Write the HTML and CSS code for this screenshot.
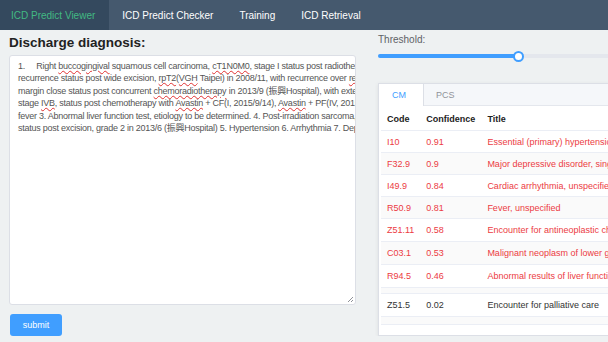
FILE: index.html
```html
<!DOCTYPE html>
<html lang="en">
<head>
    <meta charset="UTF-8">
    <meta name="viewport" content="width=device-width, initial-scale=1.0">
    <title>ICD Predict Viewer</title>
    <link rel="stylesheet" href="styles.css">
</head>
<body>
<div id="nav">
    <a class="nav-item active">ICD Predict Viewer</a>
    <a class="nav-item">ICD Predict Checker</a>
    <a class="nav-item">Training</a>
    <a class="nav-item">ICD Retrieval</a>
</div>
<div id="main">
    <div id="left">
        <h2>Discharge diagnosis:</h2>
        <div class="textbox">
            <div class="line">1.     Right <span class="typo">buccogingival</span> squamous cell carcinoma, <span class="typo">cT1N0M0</span>, stage I status post radiotherapy</div>
            <div class="line">recurrence status post wide excision, <span class="typo">rpT2</span>(<span class="typo">VGH</span> Taipei) in 2008/11, with recurrence over <span class="typo">retromolar</span></div>
            <div class="line">margin close status post concurrent <span class="typo">chemoradiotherapy</span> in 2013/9 (振興Hospital), with extension</div>
            <div class="line">stage <span class="typo">IVB</span>, status post chemotherapy with <span class="typo">Avastin</span> + CF(I, 2015/9/14), <span class="typo">Avastin</span> + PF(IV, 2015</div>
            <div class="line">fever 3. Abnormal liver function test, etiology to be determined. 4. Post-irradiation sarcoma,</div>
            <div class="line">status post excision, grade 2 in 2013/6 (振興Hospital) 5. Hypertension 6. Arrhythmia 7. Depression</div>
            <svg class="grip" width="8" height="8" viewBox="0 0 8 8">
                <path d="M7 2 L2 7 M7 5 L5 7" stroke="#909399" stroke-width="1" fill="none"/>
            </svg>
        </div>
        <button class="submit">submit</button>
    </div>
    <div id="right">
        <div class="label">Threshold:</div>
        <div class="slider">
            <div class="slider-fill" style="width: 140px"></div>
            <div class="slider-handle"></div>
        </div>
        <div class="card">
            <div class="tabs">
                <div class="tab active">CM</div>
                <div class="tab">PCS</div>
            </div>
            <table class="codes">
                <thead>
                    <tr><th class="c-code">Code</th><th class="c-conf">Confidence</th><th>Title</th></tr>
                </thead>
                <tbody>
                    <tr class="hit"><td>I10</td><td>0.91</td><td>Essential (primary) hypertension</td></tr>
                    <tr class="hit"><td>F32.9</td><td>0.9</td><td>Major depressive disorder, single episode, unspecified</td></tr>
                    <tr class="hit"><td>I49.9</td><td>0.84</td><td>Cardiac arrhythmia, unspecified</td></tr>
                    <tr class="hit"><td>R50.9</td><td>0.81</td><td>Fever, unspecified</td></tr>
                    <tr class="hit"><td>Z51.11</td><td>0.58</td><td>Encounter for antineoplastic chemotherapy</td></tr>
                    <tr class="hit"><td>C03.1</td><td>0.53</td><td>Malignant neoplasm of lower gum</td></tr>
                    <tr class="hit"><td>R94.5</td><td>0.46</td><td>Abnormal results of liver function studies</td></tr>
                    <tr class="gap"><td></td><td></td><td></td></tr>
                    <tr><td>Z51.5</td><td>0.02</td><td>Encounter for palliative care</td></tr>
                    <tr class="gap"><td></td><td></td><td></td></tr>
                </tbody>
            </table>
        </div>
    </div>
</div>
</body>
</html>
```

FILE: styles.css
```css
body {
    font-family: "Liberation Sans", Arial, "Noto Sans CJK TC", sans-serif;
    margin: 0;
    padding: 0;
    background-color: #eef1f2;
    overflow: hidden;
}

#nav {
    display: flex;
    height: 30px;
    background-color: #45596e;
}

.nav-item {
    display: flex;
    align-items: center;
    padding: 0 13px;
    font-size: 10px;
    color: #ffffff;
}

.nav-item.active {
    background-color: #34495e;
    color: #42b983;
    padding: 0 14px 0 11px;
}

#main {
    display: flex;
    width: 760px;
    padding: 0 9px;
}

#left {
    width: 347px;
    flex-shrink: 0;
}

#left h2 {
    margin: 0;
    padding-top: 5px;
    font-size: 13.5px;
    line-height: 16px;
    color: #222;
    margin-bottom: 4px;
}

.textbox {
    position: relative;
    height: 250px;
    box-sizing: border-box;
    padding: 4px 8px;
    background-color: #fff;
    border: 1px solid #dcdfe6;
    border-radius: 3px;
    overflow: hidden;
    font-size: 9px;
    letter-spacing: -0.25px;
    line-height: 12.4px;
    color: #555;
}

.line {
    white-space: pre;
}

.typo {
    text-decoration: underline wavy #e03131;
    text-decoration-thickness: 1px;
    text-underline-offset: 1px;
}

.grip {
    position: absolute;
    right: 1px;
    bottom: 1px;
}

.submit {
    display: block;
    margin: 9px 0 0 1px;
    width: 52px;
    height: 22px;
    border: none;
    border-radius: 3px;
    background-color: #409eff;
    color: #fff;
    font-family: inherit;
    font-size: 9px;
    padding: 0;
}

#right {
    width: 320px;
    flex-shrink: 0;
    margin-left: 22px;
}

.label {
    padding-top: 3px;
    font-size: 10px;
    line-height: 14px;
    color: #606266;
}

.slider {
    display: flex;
    align-items: center;
    height: 4px;
    margin-top: 7px;
    border-radius: 2px;
    background-color: #e4e7ed;
}

.slider-fill {
    height: 4px;
    border-radius: 2px 0 0 2px;
    background-color: #409eff;
}

.slider-handle {
    width: 7px;
    height: 7px;
    margin-left: -5px;
    border: 2px solid #409eff;
    border-radius: 50%;
    background-color: #fff;
}

.card {
    margin-top: 25px;
    background-color: #fff;
    border: 1px solid #dcdfe6;
    box-shadow: 0 1px 4px rgba(0, 0, 0, 0.08);
    padding-bottom: 10px;
}

.tabs {
    display: flex;
    height: 21px;
    background-color: #f5f7fa;
    border-bottom: 1px solid #e4e7ed;
}

.tab {
    display: flex;
    align-items: center;
    padding: 0 12px;
    font-size: 9px;
    color: #909399;
}

.tab.active {
    width: 20px;
    padding: 0 14px 0 10px;
    justify-content: center;
    background-color: #fff;
    color: #409eff;
    border-right: 1px solid #dcdfe6;
    margin-bottom: -1px;
}

.codes {
    width: calc(100% - 4px);
    margin: 1px 2px 0;
    border-collapse: collapse;
    font-size: 9px;
    color: #333;
}

.codes th {
    text-align: left;
    font-weight: bold;
    color: #222;
    height: 23px;
    padding: 0 6px;
    border-bottom: 1px solid #ebeef5;
    white-space: nowrap;
}

.codes td {
    height: 21px;
    padding: 0 6px;
    border-bottom: 1px solid #ebeef5;
    white-space: nowrap;
}

.codes tbody tr:nth-child(n+5) td {
    height: 22px;
}

.codes .c-code {
    width: 26px;
}

.codes .c-conf {
    width: 51px;
}

.codes tbody tr:nth-child(even) td {
    background-color: #fafafa;
}

.codes tr.hit td {
    color: #ec3b43;
}

.codes tbody tr.gap td {
    height: 5px;
}

.codes tbody tr.gap:last-child td {
    height: 7px;
}
```
